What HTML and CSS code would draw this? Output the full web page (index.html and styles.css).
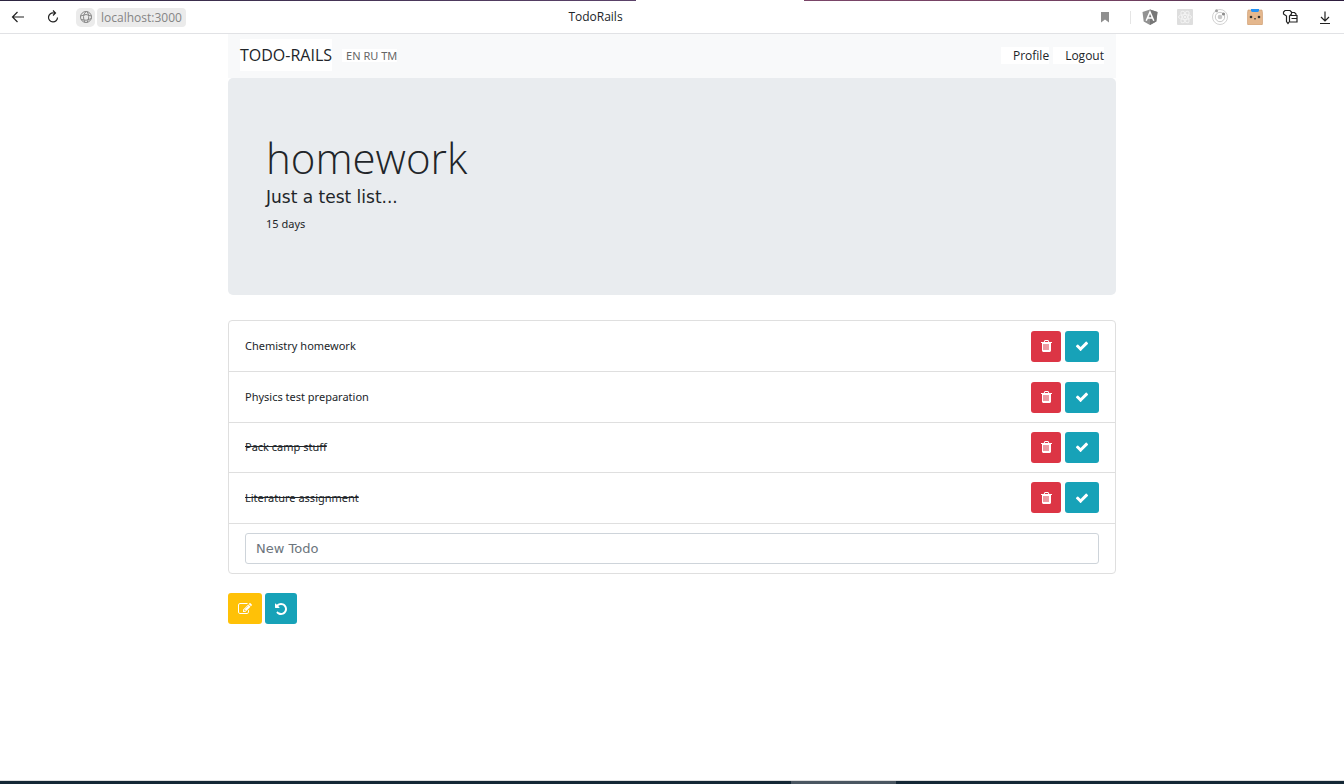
FILE: index.html
```html
<!DOCTYPE html>
<html lang="en">
<head>
<meta charset="utf-8">
<title>TodoRails</title>
<link rel="stylesheet" href="styles.css">
</head>
<body>
<svg class="sprite" aria-hidden="true">
  <symbol id="trash" viewBox="0 0 1792 1792"><path d="M704 1376v-704q0-14-9-23t-23-9h-64q-14 0-23 9t-9 23v704q0 14 9 23t23 9h64q14 0 23-9t9-23zM960 1376v-704q0-14-9-23t-23-9h-64q-14 0-23 9t-9 23v704q0 14 9 23t23 9h64q14 0 23-9t9-23zM1216 1376v-704q0-14-9-23t-23-9h-64q-14 0-23 9t-9 23v704q0 14 9 23t23 9h64q14 0 23-9t9-23zM736 384h448l-48-117q-7-9-17-11h-317q-10 2-17 11zM1664 416v64q0 14-9 23t-23 9h-96v948q0 83-47 143.500t-113 60.500h-832q-66 0-113-58.500t-47-141.500v-952h-96q-14 0-23-9t-9-23v-64q0-14 9-23t23-9h309l70-167q15-37 54-63t79-26h320q40 0 79 26t54 63l70 167h309q14 0 23 9t9 23z"/></symbol>
  <symbol id="check" viewBox="0 0 1792 1792"><path d="M1671 566q0 40-28 68l-724 724-136 136q-28 28-68 28t-68-28l-136-136-362-362q-28-28-28-68t28-68l136-136q28-28 68-28t68 28l294 295 656-657q28-28 68-28t68 28l136 136q28 28 28 68z"/></symbol>
  <symbol id="undo" viewBox="0 0 1792 1792"><path d="M1664 896q0 156-61 298t-164 245-245 164-298 61q-172 0-327-72.500t-264-204.500q-7-10-6.500-22.500t8.500-20.500l137-138q10-9 25-9 16 2 23 12 73 95 179 147t225 52q104 0 198.500-40.500t163.500-109.500 109.500-163.500 40.500-198.500-40.500-198.500-109.500-163.500-163.500-109.500-198.500-40.500q-98 0-188 35.500t-160 101.500l137 138q31 30 14 69-17 40-59 40h-448q-26 0-45-19t-19-45v-448q0-42 40-59 39-17 69 14l130 129q107-101 244.500-156.500t284.500-55.500q156 0 298 61t245 164 164 245 61 298z"/></symbol>
  <symbol id="edit" viewBox="0 0 1792 1792"><path d="M888 1184l116-116-152-152-116 116v56h96v96h56zM1328 464q-16-16-33 1l-350 350q-17 17-1 33t33-1l350-350q17-17 1-33zM1408 1058v190q0 119-84.500 203.500t-203.500 84.500h-832q-119 0-203.500-84.500t-84.500-203.500v-832q0-119 84.500-203.500t203.500-84.500h832q63 0 117 25 15 7 18 23 3 17-9 29l-49 49q-14 14-32 8-23-6-45-6h-832q-66 0-113 47t-47 113v832q0 66 47 113t113 47h832q66 0 113-47t47-113v-126q0-13 9-22l64-64q15-15 35-7t20 29zM1312 320l288 288-672 672h-288v-288zM1756 452l-92 92-288-288 92-92q28-28 68-28t68 28l152 152q28 28 28 68t-28 68z"/></symbol>
</svg>

<div class="frame"><span class="frame-left"></span><span class="frame-gap"></span><span class="frame-right"></span></div>
<header class="browser">
  <div class="browser-side">
    <button class="tool" aria-label="Back"><svg viewBox="0 0 16 16" class="line"><path d="M14 8H2.500M7.500 3L2.500 8l5 5"/></svg></button>
    <button class="tool reload" aria-label="Reload"><svg viewBox="0 0 16 16" class="line"><path d="M12.500 8.500a4.500 4.500 0 1 1-4-4.500h2M8 1.500L10.500 4 8 6.500"/></svg></button>
    <div class="address">
      <button class="site" aria-label="Site information"><svg viewBox="0 0 16 16" class="line globe"><circle cx="8" cy="8" r="5.500"/><path d="M2.500 7q5.500-3 11 0M3 10.500q5 2 10.500-1M8 2.500Q3.500 7 7 13.500M9 2.500q3.500 5 0 11"/></svg></button>
      <span class="url">localhost:3000</span>
    </div>
  </div>
  <div class="page-title">TodoRails</div>
  <div class="browser-side tools">
    <button class="tool" aria-label="Bookmark"><svg viewBox="0 0 16 16"><path fill="#8f8f8f" d="M4 3h8v10.500l-4-3-4 3z"/></svg></button>
    <span class="divider"></span>
    <button class="tool" aria-label="Angular"><svg viewBox="0 0 16 16"><path fill="#929292" d="M8 .5l7.500 2.500-1.200 9.500L8 16l-6.300-3.500L.5 3z"/><path fill="#777" d="M8 .5l7.500 2.500-1.200 9.500L8 16z"/><path fill="none" stroke="#fff" stroke-width="1.500" d="M4.200 11.800L8 3l3.800 8.800M5.800 9h4.400"/></svg></button>
    <button class="tool" aria-label="React"><svg viewBox="0 0 16 16"><rect width="16" height="16" rx="1" fill="#dedede"/><g fill="none" stroke="#f3f3f3"><ellipse cx="8" cy="8" rx="6.500" ry="2.500"/><ellipse cx="8" cy="8" rx="6.500" ry="2.500" transform="rotate(60 8 8)"/><ellipse cx="8" cy="8" rx="6.500" ry="2.500" transform="rotate(120 8 8)"/></g><circle cx="8" cy="8" r="1.200" fill="#f3f3f3"/></svg></button>
    <button class="tool" aria-label="Orbit"><svg viewBox="0 0 16 16"><circle cx="8" cy="8" r="7.500" fill="none" stroke="#d2d2d2"/><circle cx="8" cy="8" r="4.700" fill="none" stroke="#c8c8c8"/><circle cx="8" cy="8" r="2.300" fill="#c8c8c8"/><circle cx="4.500" cy="1.700" r="1.500" fill="#a0a0a0"/><circle cx="11.500" cy="5" r="1.600" fill="#8d8d8d"/></svg></button>
    <button class="tool" aria-label="Assistant"><svg viewBox="0 0 16 16"><path fill="#e4b78d" stroke="#c99b70" stroke-width=".6" d="M1 1h14l.7 4v9.500L15 16H1l-.7-1.500V5z"/><path fill="#2391f5" d="M4 0h8v2l-1 1H5L4 2z"/><circle cx="4" cy="8" r="1.300" fill="#333"/><circle cx="12" cy="8" r="1.300" fill="#333"/><path fill="none" stroke="#333" d="M7 9.500q1 1.300 2 0"/></svg></button>
    <button class="tool" aria-label="Passwords"><svg viewBox="0 0 16 16" class="line"><path d="M3 1.500h5L9.500 3v2L7.500 7v5.500L6 14.500l-1.500-2V7L1.500 5V3zM9.500 3.500h3L14 5v1.500M8 6.500h7v6.500H8M9.500 9.500H15"/></svg></button>
    <button class="tool" aria-label="Downloads"><svg viewBox="0 0 16 16" class="line"><path d="M8 2.500v9M4 8L8 12l4-4M3 14.500h10"/></svg></button>
  </div>
</header>

<div class="container">
  <nav class="navbar">
    <a class="brand" href="#">TODO-RAILS</a>
    <div class="languages"><a href="#">EN</a> <a href="#">RU</a> <a href="#">TM</a></div>
    <div class="account"><a href="#">Profile</a><a href="#">Logout</a></div>
  </nav>
  <main>
    <section class="hero">
      <h1>homework</h1>
      <p class="lead">Just a test list...</p>
      <p class="days">15 days</p>
    </section>
    <ul class="todos">
      <li><span>Chemistry homework</span><div class="actions"><button class="btn danger" aria-label="Delete"><svg><use href="#trash"/></svg></button><button class="btn info" aria-label="Complete"><svg><use href="#check"/></svg></button></div></li>
      <li><span>Physics test preparation</span><div class="actions"><button class="btn danger" aria-label="Delete"><svg><use href="#trash"/></svg></button><button class="btn info" aria-label="Complete"><svg><use href="#check"/></svg></button></div></li>
      <li><s>Pack camp stuff</s><div class="actions"><button class="btn danger" aria-label="Delete"><svg><use href="#trash"/></svg></button><button class="btn info" aria-label="Complete"><svg><use href="#check"/></svg></button></div></li>
      <li><s>Literature assignment</s><div class="actions"><button class="btn danger" aria-label="Delete"><svg><use href="#trash"/></svg></button><button class="btn info" aria-label="Complete"><svg><use href="#check"/></svg></button></div></li>
      <li><input type="text" placeholder="New Todo" aria-label="New Todo"></li>
    </ul>
    <div class="actions list-actions"><button class="btn warning" aria-label="Edit list"><svg><use href="#edit"/></svg></button><button class="btn info undo" aria-label="Back to lists"><svg><use href="#undo"/></svg></button></div>
  </main>
</div>
<footer class="taskbar"><span></span></footer>
</body>
</html>
```

FILE: styles.css
```css
* { box-sizing: border-box; }
body {
  margin: 0;
  min-height: 100vh;
  display: flex;
  flex-direction: column;
  background: #fff;
  color: #212529;
  font: 11px/20px "Noto Sans", Verdana, sans-serif;
}
a { color: inherit; text-decoration: none; }
button { border: 0; padding: 0; background: none; color: inherit; font: inherit; }
svg { display: block; fill: currentColor; }
.sprite { display: none; }
.line { fill: none; stroke: #222; stroke-width: 1.2; }

.frame { display: grid; grid-template-columns: 636fr 168fr 540fr; height: 1px; background: #2d2038; }
.frame-left { background: linear-gradient(90deg, #2c2440, #5b4269); }
.frame-gap { background: #fff; }
.frame-right { background: linear-gradient(90deg, #7a4568, #713f60 60%, #2b1c3d); }

.browser {
  display: grid;
  grid-template-columns: 1fr auto 1fr;
  align-items: center;
  height: 33px;
  padding: 0 11px 0 10px;
  border-bottom: 1px solid #e1e2e5;
  font: 12px/18px "Open Sans", "Segoe UI", sans-serif;
}
.browser-side { display: flex; align-items: center; gap: 19px; }
.tool svg { width: 16px; height: 16px; }
.address { display: flex; gap: 2px; margin-left: -4px; }
.site { display: flex; align-items: center; justify-content: center; width: 19px; height: 19px; border-radius: 5px; background: #ebebeb; }
.site svg { width: 16px; height: 16px; }
.globe { stroke: #888; stroke-width: 1; }
.url { padding: 0 4px; border-radius: 4px; background: #ebebeb; color: #858585; line-height: 19px; }
.page-title { padding-right: 152px; }
.tools { justify-content: flex-end; }
.divider { width: 1px; height: 13px; margin: 0 -8px 0 -2px; background: #e5e5e5; }

.container { width: 100%; max-width: 888px; margin: 0 auto; flex: 1; }
.navbar {
  display: flex;
  align-items: center;
  height: 44px;
  padding: 0 12px 2px;
  background: #f8f9fa;
  font-family: "Open Sans", "Segoe UI", sans-serif;
}
.brand { padding: 4px 0; background: #fff; font-size: 16px; line-height: 24px; }
.languages { margin-left: 10px; padding-left: 4px; background: #fff; color: #666; font: 11px/13px "Noto Sans", Verdana, sans-serif; }
.account { display: flex; gap: 4px; margin-left: auto; font-size: 12px; line-height: 17px; }
.account a { padding-left: 12px; background: #fff; }

.hero { min-height: 217px; padding: 52px 38px; border-radius: 5px; background: #e9ecef; }
h1 { margin: 0; font: 300 42px/56px "Open Sans", "Segoe UI", sans-serif; }
p { margin: 0; }
.lead { margin-bottom: 7px; font: 17px/22px "DejaVu Sans", Verdana, sans-serif; }
.days { line-height: 18px; }

.todos {
  display: grid;
  grid-auto-rows: 1fr;
  min-height: 254px;
  margin: 25px 0 19px;
  padding: 0;
  border: 1px solid #dfdfdf;
  border-radius: 4px;
  list-style: none;
}
.todos li { display: flex; align-items: center; justify-content: space-between; padding: 0 16px; }
.todos li + li { border-top: 1px solid #dfdfdf; }
.actions { display: flex; gap: 4px; }
.btn { display: flex; align-items: center; justify-content: center; width: 34px; height: 31px; border-radius: 3px; color: #fff; }
.btn svg { width: 14px; height: 14px; }
.danger { width: 30px; background: #dc3545; }
.info { background: #17a2b8; }
.warning { background: #ffc107; }
.undo { width: 32px; }
.list-actions { gap: 3px; }
input { width: 100%; height: 31px; padding: 0 10px; border: 1px solid #ced4da; border-radius: 3px; background: #fff; color: #495057; font: 13px/20px "DejaVu Sans", Verdana, sans-serif; }
input::placeholder { color: #6c757d; opacity: 1; }

.taskbar { display: grid; grid-template-columns: 791fr 105fr 448fr; height: 4px; border-top: 1px solid #dedede; background: #142735; }
.taskbar span { grid-column: 2; background: #4a5661; }
```
